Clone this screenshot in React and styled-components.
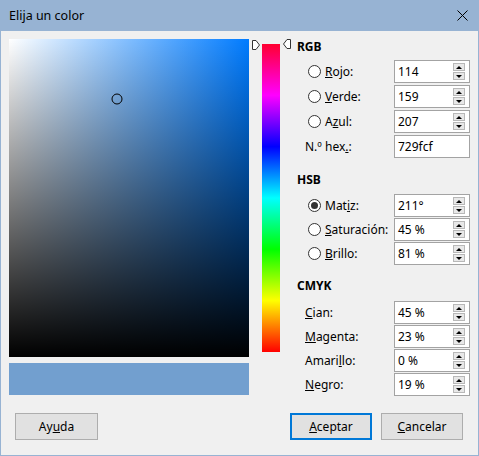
import React from 'react'
import styled, { createGlobalStyle } from 'styled-components'

const GlobalStyle = createGlobalStyle`
  html, body {
    margin: 0;
    padding: 0;
    background: #f0f0f0;
  }
  body {
    font-family: "Segoe UI", "Noto Sans", "Open Sans", sans-serif;
    font-size: 12px;
    color: #000;
  }
`

const Window = styled.div`
  width: 479px;
  height: 456px;
  box-sizing: border-box;
  background: #f0f0f0;
  border: 1px solid #97b3d3;
  border-top: none;
  display: flex;
  flex-direction: column;
`

const TitleBar = styled.div`
  height: 31px;
  margin: 0 -1px;
  background: #97b3d3;
  display: flex;
  align-items: center;
  justify-content: space-between;
  padding: 0 11px 0 9px;
  font-size: 12.5px;
`

const CloseIcon = styled.svg`
  width: 11px;
  height: 11px;
  display: block;
`

const Body = styled.div`
  flex: 1;
  padding: 8px 8px 0 8px;
  display: flex;
  flex-direction: column;
`

const Main = styled.div`
  display: flex;
  align-items: flex-start;
`

const LeftColumn = styled.div`
  width: 240px;
  display: flex;
  flex-direction: column;
  gap: 6px;
`

const ColorField = styled.div`
  position: relative;
  height: 318px;
  background:
    linear-gradient(to bottom, rgba(0, 0, 0, 0), #000),
    linear-gradient(to right, #fff, ${p => p.$hue});
`

const Marker = styled.div`
  position: absolute;
  width: 11px;
  height: 11px;
  border: 1px solid #000;
  border-radius: 50%;
  box-sizing: border-box;
  transform: translate(-50%, -50%);
`

const Swatch = styled.div`
  height: 32px;
  background: ${p => p.$color};
`

const HueColumn = styled.div`
  position: relative;
  width: 38px;
  margin-left: 3px;
  padding-top: 5px;
`

const HueBar = styled.div`
  width: 18px;
  height: 308px;
  margin-left: 10px;
  background: linear-gradient(
    to bottom,
    #ff0030 0%,
    #ff00ff 16.66%,
    #0000ff 33.33%,
    #00ffff 50%,
    #00ff00 66.66%,
    #ffff00 83.33%,
    #ff0000 100%
  );
`

const Thumb = styled.svg`
  position: absolute;
  width: 8px;
  height: 10px;
  left: ${p => (p.$side === 'left' ? '0' : '31px')};
  top: ${p => (p.$side === 'left' ? '1px' : '0')};
`

const RightColumn = styled.div`
  width: 173px;
  margin-left: 7px;
  display: flex;
  flex-direction: column;
`

const Heading = styled.div`
  font-weight: 700;
  line-height: 16px;
  margin-top: ${p => p.$top || 0}px;
  margin-bottom: ${p => p.$bottom || 5}px;
`

const Rows = styled.div`
  display: flex;
  flex-direction: column;
  gap: ${p => p.$gap}px;
`

const Row = styled.div`
  display: flex;
  align-items: center;
  height: 23px;
`

const Label = styled.label`
  flex: 1;
  display: flex;
  align-items: center;
  padding-left: ${p => (p.$radio ? 11 : 8)}px;
  gap: 4px;
  white-space: nowrap;
`

const Radio = styled.span`
  width: 13px;
  height: 13px;
  box-sizing: border-box;
  border: 1px solid #333;
  border-radius: 50%;
  background: #fff;
  display: flex;
  align-items: center;
  justify-content: center;

  &::after {
    content: '';
    width: 7px;
    height: 7px;
    border-radius: 50%;
    background: ${p => (p.$checked ? '#333' : 'transparent')};
  }
`

const Field = styled.div`
  width: 76px;
  height: 23px;
  box-sizing: border-box;
  border: 1px solid #a3a3a3;
  background: #fff;
  display: flex;
  align-items: center;
  padding-left: 3px;
  padding-right: 4px;
`

const Value = styled.span`
  flex: 1;
`

const Spin = styled.div`
  width: 12px;
  display: flex;
  flex-direction: column;
  gap: 1px;
`

const SpinButton = styled.div`
  height: 8px;
  box-sizing: border-box;
  border: 1px solid #b8b8b8;
  background: #e8e8e8;
  display: flex;
  align-items: center;
  justify-content: center;

  &::after {
    content: '';
    width: 0;
    height: 0;
    border-left: 3px solid transparent;
    border-right: 3px solid transparent;
    ${p =>
      p.$down
        ? 'border-top: 3px solid #000;'
        : 'border-bottom: 3px solid #000;'}
  }
`

const ButtonBar = styled.div`
  display: flex;
  align-items: center;
  margin-top: 17px;
  padding: 0 7px 0 6px;
  gap: 9px;
`

const Button = styled.button`
  width: ${p => p.$width || 82}px;
  height: 27px;
  box-sizing: border-box;
  background: #e1e1e1;
  border: ${p => (p.$default ? '2px solid #0078d7' : '1px solid #adadad')};
  font-family: inherit;
  font-size: 12px;
  color: #000;
  padding: 0;
  margin-left: ${p => (p.$push ? 'auto' : '0')};
`

const U = styled.span`
  text-decoration: underline;
  text-underline-offset: 1px;
`

const Key = ({ text, k }) => (
  <>
    {text.slice(0, k)}
    <U>{text[k]}</U>
    {text.slice(k + 1)}
  </>
)

const sections = [
  {
    title: 'RGB',
    gap: 2,
    rows: [
      { label: 'Rojo:', k: 0, value: '114', radio: true },
      { label: 'Verde:', k: 0, value: '159', radio: true },
      { label: 'Azul:', k: 1, value: '207', radio: true },
      { label: 'N.º hex.:', k: 7, value: '729fcf', hex: true },
    ],
  },
  {
    title: 'HSB',
    gap: 1,
    top: 14,
    bottom: 6,
    rows: [
      { label: 'Matiz:', k: 3, value: '211°', radio: true, checked: true },
      { label: 'Saturación:', k: 0, value: '45 %', radio: true },
      { label: 'Brillo:', k: 0, value: '81 %', radio: true },
    ],
  },
  {
    title: 'CMYK',
    gap: 1,
    top: 13,
    bottom: 7,
    rows: [
      { label: 'Cian:', k: 0, value: '45 %' },
      { label: 'Magenta:', k: 0, value: '23 %' },
      { label: 'Amarillo:', k: 5, value: '0 %' },
      { label: 'Negro:', k: 0, value: '19 %' },
    ],
  },
]

const App = () => {
  const hue = 211
  const sat = 0.45
  const bright = 0.81

  return (
    <>
      <GlobalStyle />
      <Window>
        <TitleBar>
          <span>Elija un color</span>
          <CloseIcon viewBox="0 0 11 11">
            <path d="M0.5 0.5 L10.5 10.5 M10.5 0.5 L0.5 10.5" stroke="#000" strokeWidth="1" />
          </CloseIcon>
        </TitleBar>
        <Body>
          <Main>
            <LeftColumn>
              <ColorField $hue={`hsl(${hue}, 100%, 50%)`}>
                <Marker style={{ left: `${sat * 100}%`, top: `${(1 - bright) * 100}%` }} />
              </ColorField>
              <Swatch $color="#729fcf" />
            </LeftColumn>
            <HueColumn>
              <Thumb $side="left" viewBox="0 0 8 10">
                <path d="M0.5 0.5 H4 L7.5 5 L4 9.5 H0.5 Z" fill="#fff" stroke="#333" strokeWidth="1" />
              </Thumb>
              <HueBar />
              <Thumb $side="right" viewBox="0 0 8 10">
                <path d="M7.5 0.5 H4 L0.5 5 L4 9.5 H7.5 Z" fill="#fff" stroke="#333" strokeWidth="1" />
              </Thumb>
            </HueColumn>
            <RightColumn>
              {sections.map(s => (
                <React.Fragment key={s.title}>
                  <Heading $top={s.top} $bottom={s.bottom}>{s.title}</Heading>
                  <Rows $gap={s.gap}>
                    {s.rows.map(r => (
                      <Row key={r.label}>
                        <Label $radio={r.radio}>
                          {r.radio && <Radio $checked={r.checked} />}
                          <span>
                            <Key text={r.label} k={r.k} />
                          </span>
                        </Label>
                        <Field>
                          <Value>{r.value}</Value>
                          {!r.hex && (
                            <Spin>
                              <SpinButton />
                              <SpinButton $down />
                            </Spin>
                          )}
                        </Field>
                      </Row>
                    ))}
                  </Rows>
                </React.Fragment>
              ))}
            </RightColumn>
          </Main>
          <ButtonBar>
            <Button $width={83}>
              <Key text="Ayuda" k={2} />
            </Button>
            <Button $default $push>
              <Key text="Aceptar" k={0} />
            </Button>
            <Button>
              <Key text="Cancelar" k={0} />
            </Button>
          </ButtonBar>
        </Body>
      </Window>
    </>
  )
}

export default App
